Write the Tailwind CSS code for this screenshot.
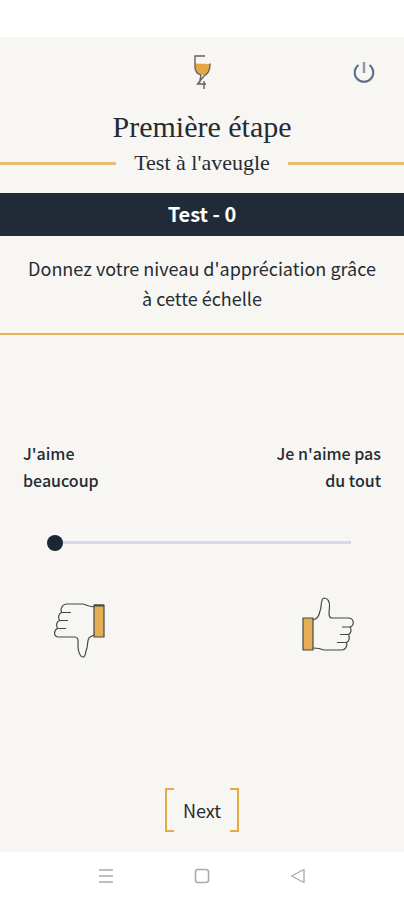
<!DOCTYPE html>
<html lang="fr">
<head>
  <meta charset="UTF-8" />
  <meta name="viewport" content="width=device-width, initial-scale=1.0"/>
  <title>Test à l'aveugle</title>
  <script src="https://cdn.jsdelivr.net/npm/@tailwindcss/browser@4"></script>
</head>
<body class="min-h-screen flex flex-col bg-white pt-[37px] font-['Noto_Sans_CJK_JP','Noto_Sans',sans-serif] text-[#262b33]">

  <main class="grow flex flex-col bg-[#f7f6f2]">
    <!-- Logo + logout -->
    <header class="grid grid-cols-3 items-center px-7 pt-4">
      <svg class="col-start-2 justify-self-center w-5 h-[38px]" viewBox="0 0 20 38" fill="none" aria-hidden="true">
        <path d="M3 10.500 L18 11 C18.500 17 15.500 21 12 22 C7 22 4 20 3.300 16Z" fill="#e5a645"/>
        <path d="M13 3 H3 V14 C3.200 18.500 5 21 9 22 M18 10.500 C18.500 17 15.500 21.500 12 22.500 M9 22 L7.500 30 M12.500 22.500 L5.500 31 H14 M12 28 V36" stroke="#66635f" stroke-width="1.400"/>
      </svg>
      <button type="button" aria-label="Déconnexion" class="justify-self-end">
        <svg class="w-6 h-6" viewBox="0 0 24 24" fill="none" stroke-width="2">
          <path d="M6.500 5 A9.300 9.300 0 1 0 17.500 5" stroke="#5b6c8c"/>
          <path d="M12 2 V13" stroke="#9299a3" stroke-width="2.500"/>
        </svg>
      </button>
    </header>

    <!-- Titles -->
    <h1 class="mt-4 text-center font-['Liberation_Serif',serif] text-[30px] leading-10">Première étape</h1>
    <div class="flex items-center gap-[18px]">
      <span class="grow h-[3px] bg-[#e9bd74]"></span>
      <h2 class="font-['Liberation_Serif',serif] text-[22px] leading-8">Test à l'aveugle</h2>
      <span class="grow h-[3px] bg-[#e9bd74]"></span>
    </div>

    <p class="mt-3.5 bg-[#212b38] pb-0.5 text-center text-[20px] font-bold leading-[41px] text-white">Test - 0</p>

    <p class="border-b-2 border-[#e3b458] px-6 pt-[17px] pb-5 text-center text-[18px] leading-[30px]">Donnez votre niveau d'appréciation grâce à cette échelle</p>

    <!-- Rating scale -->
    <section class="mt-[105px]">
      <div class="flex justify-between px-[23px] text-[16px] font-medium leading-[27px]">
        <label for="rating">J'aime<br>beaucoup</label>
        <span class="text-right">Je n'aime pas<br>du tout</span>
      </div>
      <div class="mt-10 flex pl-[47px] pr-[53px]">
        <input id="rating" type="range" min="0" max="10" value="0" class="grow h-4 appearance-none bg-transparent [&::-webkit-slider-runnable-track]:h-[3px] [&::-webkit-slider-runnable-track]:bg-[#d5dae6] [&::-webkit-slider-thumb]:appearance-none [&::-webkit-slider-thumb]:w-4 [&::-webkit-slider-thumb]:h-4 [&::-webkit-slider-thumb]:-mt-[6px] [&::-webkit-slider-thumb]:rounded-full [&::-webkit-slider-thumb]:bg-[#1b2736]">
      </div>
      <div class="mt-10 flex justify-between pl-[45px] pr-[39px]">
        <svg class="w-[70px] h-[75px]" viewBox="0 0 70 75" fill="none" stroke="#44484b" stroke-width="1.200" stroke-linejoin="round" aria-hidden="true">
          <path d="M49 17 L44 16 L38 14 H21 C17 15 15 19 16.500 22.500 C13 24 13 28 14.500 30.500 C11 32 11 36 12.500 38.500 C9 40 8 46 13 47 H30 C34 47 33 52 33 56 C33 61 35 67 38 67 C41 67 40 62 42 58 C43 54 42 49 45 47 L49 45 M16.500 22.500 H26 M14.500 30.500 H23 M12.500 38.500 H21"/>
          <path d="M49 15 H59 V47 H49Z" fill="#e5ae55"/>
          <path d="M49 15.500 H59" stroke-width="2"/>
        </svg>
        <svg class="w-[70px] h-[75px]" viewBox="0 0 70 75" fill="none" stroke="#44484b" stroke-width="1.200" stroke-linejoin="round" aria-hidden="true">
          <path d="M18 30 C23 29 24 25 25 21 C27 18 25 9 29 8 C33 8 35 12 34.500 17 C34 22 33 28 37 28 H54 C60 29 59 36 55 37 C57 40 56 43 53.500 44.500 C55 48 54 51 51.500 52.500 C53 56 50 60 47 60 H29 L24 58.500 L18 58 M47 37 H55 M45 44.500 H53.500 M42 52.500 H51.500"/>
          <path d="M8 28 H18 V60 H8Z" fill="#e5ae55"/>
        </svg>
      </div>
    </section>

    <!-- Next -->
    <div class="mt-auto flex justify-center pb-5">
      <button type="button" class="flex text-[18px] leading-[44px]">
        <span class="w-[9px] border-2 border-r-0 border-[#e3ac46]"></span>
        <span class="px-[9px]">Next</span>
        <span class="w-[9px] border-2 border-l-0 border-[#e3ac46]"></span>
      </button>
    </div>
  </main>

  <!-- System navigation -->
  <nav class="flex h-12 items-center justify-center gap-[80px] text-[#a9a9a9]">
    <button type="button" aria-label="Menu">
      <svg class="w-4 h-4" viewBox="0 0 16 16" fill="none" stroke="currentColor" stroke-width="1.500"><path d="M1 2 H15 M1 8 H15 M1 14 H15"/></svg>
    </button>
    <button type="button" aria-label="Accueil">
      <svg class="w-4 h-4" viewBox="0 0 16 16" fill="none" stroke="currentColor" stroke-width="1.500"><rect x="1.500" y="1.500" width="13" height="13" rx="2.500"/></svg>
    </button>
    <button type="button" aria-label="Retour">
      <svg class="w-4 h-4" viewBox="0 0 16 16" fill="none" stroke="currentColor" stroke-width="1.300" stroke-linejoin="round"><path d="M14 1.500 V14.500 L1.500 8Z"/></svg>
    </button>
  </nav>
</body>
</html>
